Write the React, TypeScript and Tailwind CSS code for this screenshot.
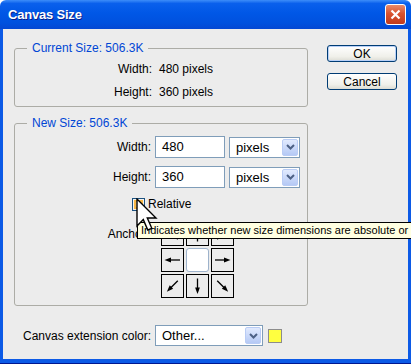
import React from "react";

const font = "font-['Liberation_Sans',Arial,sans-serif]";

function Chevron() {
	return (
		<svg width="9" height="6" viewBox="0 0 9 6">
			<path d="M1 1 L4.5 4.5 L8 1" fill="none" stroke="#4D6185" strokeWidth="2" />
		</svg>
	);
}

function Select({ value, width }: { value: string; width: string }) {
	return (
		<div className={`${width} h-[21px] flex items-center justify-between border border-[#7F9DB9] bg-white`}>
			<span className="pl-[6px] text-[13px] leading-none text-black">{value}</span>
			<div className="mr-[1px] w-[16px] h-[17px] rounded-[2px] border border-[#B9CCF5] bg-[linear-gradient(to_bottom,#E1EAFE,#B5C9F5)] flex items-center justify-center">
				<Chevron />
			</div>
		</div>
	);
}

function Arrow({ angle }: { angle: number }) {
	return (
		<svg width="21" height="22" viewBox="0 0 21 22">
			<g transform={`rotate(${angle} 10.5 11)`}>
				<line x1="18" y1="11" x2="7" y2="11" stroke="#000" strokeWidth="1.3" />
				<polygon points="2.5,11 9,8.6 9,13.4" fill="#000" />
			</g>
		</svg>
	);
}

function Button({ label, primary }: { label: string; primary?: boolean }) {
	return (
		<div
			className={`w-[70px] h-[17px] rounded-[3px] border border-[#003C74] bg-[linear-gradient(to_bottom,#FFFFFF,#F0F0EA_70%,#DCDCD4)] flex items-center justify-center text-[12px] text-black ${
				primary ? "shadow-[inset_0_0_0_1px_#B8D0F8]" : ""
			}`}
		>
			{label}
		</div>
	);
}

export default function App() {
	const anchors: (number | null)[] = [45, 90, 135, 0, null, 180, -45, -90, -135];

	return (
		<div className={`relative w-[411px] h-[364px] overflow-hidden bg-white ${font}`}>
			<div className="flex flex-col h-full">
				{/* Title bar */}
				<div className="h-[29px] rounded-tl-[6px] rounded-tr-[6px] bg-[linear-gradient(to_bottom,#3D8DF9_0%,#0A60EC_12%,#0057E6_45%,#0051DE_80%,#0448D3_100%)] flex items-center justify-between pl-[8px] pr-[5px]">
					<span className="text-white font-bold text-[13px] tracking-[-0.2px] [text-shadow:1px_1px_0_#0A1F8A]">
						Canvas Size
					</span>
					<div className="w-[21px] h-[21px] rounded-[3px] border border-white bg-[linear-gradient(to_bottom,#E98B6C,#D9532F_45%,#C13A1C)] flex items-center justify-center">
						<svg width="11" height="11" viewBox="0 0 11 11">
							<path d="M1.5 1.5 L9.5 9.5 M9.5 1.5 L1.5 9.5" stroke="#fff" strokeWidth="2.2" />
						</svg>
					</div>
				</div>

				{/* Body */}
				<div className="flex-1 border-l-[3px] border-r-[3px] border-b-[4px] border-[#0C5AE6] bg-[#ECECEC] text-[12px] text-black">
					<div className="flex">
						<div className="pl-[11px] pt-[12px]">
							<fieldset className="w-[294px] border border-[#ACACA6] rounded-[3px]">
								<legend className="ml-[12px] px-[5px] text-[12px] leading-[14px] text-[#0046D5]">
									Current Size: 506.3K
								</legend>
								<div className="flex flex-col gap-[5px] pt-[5px] pb-[5px]">
									<div className="flex items-center h-[18px]">
										<span className="w-[137px] text-right">Width:</span>
										<span className="ml-[7px]">480 pixels</span>
									</div>
									<div className="flex items-center h-[18px]">
										<span className="w-[137px] text-right">Height:</span>
										<span className="ml-[7px]">360 pixels</span>
									</div>
								</div>
							</fieldset>

							<fieldset className="mt-[9px] w-[294px] border border-[#ACACA6] rounded-[3px]">
								<legend className="ml-[12px] px-[5px] text-[12px] leading-[14px] text-[#0046D5]">
									New Size: 506.3K
								</legend>
								<div className="pt-[6px] pb-[7px]">
									<div className="flex items-center">
										<span className="w-[136px] text-right">Width:</span>
										<div className="ml-[4px] w-[70px] h-[22px] border border-[#7F9DB9] bg-white flex items-center pl-[6px] text-[13px]">
											480
										</div>
										<div className="ml-[4px]">
											<Select value="pixels" width="w-[71px]" />
										</div>
									</div>
									<div className="flex items-center mt-[8px]">
										<span className="w-[136px] text-right">Height:</span>
										<div className="ml-[4px] w-[70px] h-[22px] border border-[#7F9DB9] bg-white flex items-center pl-[6px] text-[13px]">
											360
										</div>
										<div className="ml-[4px]">
											<Select value="pixels" width="w-[71px]" />
										</div>
									</div>
									<div className="flex items-center mt-[7px] ml-[117px]">
										<div className="w-[13px] h-[13px] border border-[#1C5180] bg-[#F4F3EE] p-[1px]">
											<div className="w-full h-full border-2 border-[#F8B847] bg-[#F6E8C8]" />
										</div>
										<span className="ml-[3px] text-[12px]">Relative</span>
									</div>
									<div className="flex items-start mt-[9px]">
										<span className="w-[134px] text-right mt-[3px]">Anchor:</span>
										<div className="ml-[12px] grid grid-cols-[23px_23px_23px] grid-rows-[24px_24px_24px] gap-x-[2px] gap-y-[2px]">
											{anchors.map((a, i) =>
												a === null ? (
													<div key={i} className="rounded-[3px] border border-[#9DB2CB] bg-white" />
												) : (
													<div key={i} className="border border-black bg-[#ECECEC] flex items-center justify-center">
														<Arrow angle={a} />
													</div>
												)
											)}
										</div>
									</div>
								</div>
							</fieldset>

							<div className="flex items-center mt-[19px] pl-[9px]">
								<span className="w-[132px]">Canvas extension color:</span>
								<Select value="Other..." width="w-[108px]" />
								<div className="ml-[5px] w-[14px] h-[14px] border border-[#8C8C8C] bg-[#FFFF40]" />
							</div>
						</div>

						{/* Buttons */}
						<div className="ml-[19px] pt-[16px] flex flex-col gap-[11px]">
							<Button label="OK" primary />
							<Button label="Cancel" />
						</div>
					</div>
				</div>
				<div className="h-[1px] bg-[#00178F]" />
			</div>

			{/* Tooltip */}
			<div className="absolute left-[137px] top-[222px] h-[17px] w-[300px] border border-black bg-[#FFFFE1] pl-[3px] text-[11px] leading-[15px] whitespace-nowrap text-black">
				Indicates whether new size dimensions are absolute or relative
			</div>

			{/* Mouse cursor */}
			<svg className="absolute left-[136px] top-[198px]" width="22" height="34" viewBox="0 0 22 34">
				<path
					d="M1 1 L1 28 L7.3 21.6 L11.8 32 L15.8 30.3 L11.3 20 L20 20 Z"
					fill="#fff"
					stroke="#000"
					strokeWidth="1.4"
					strokeLinejoin="miter"
				/>
			</svg>
		</div>
	);
}
